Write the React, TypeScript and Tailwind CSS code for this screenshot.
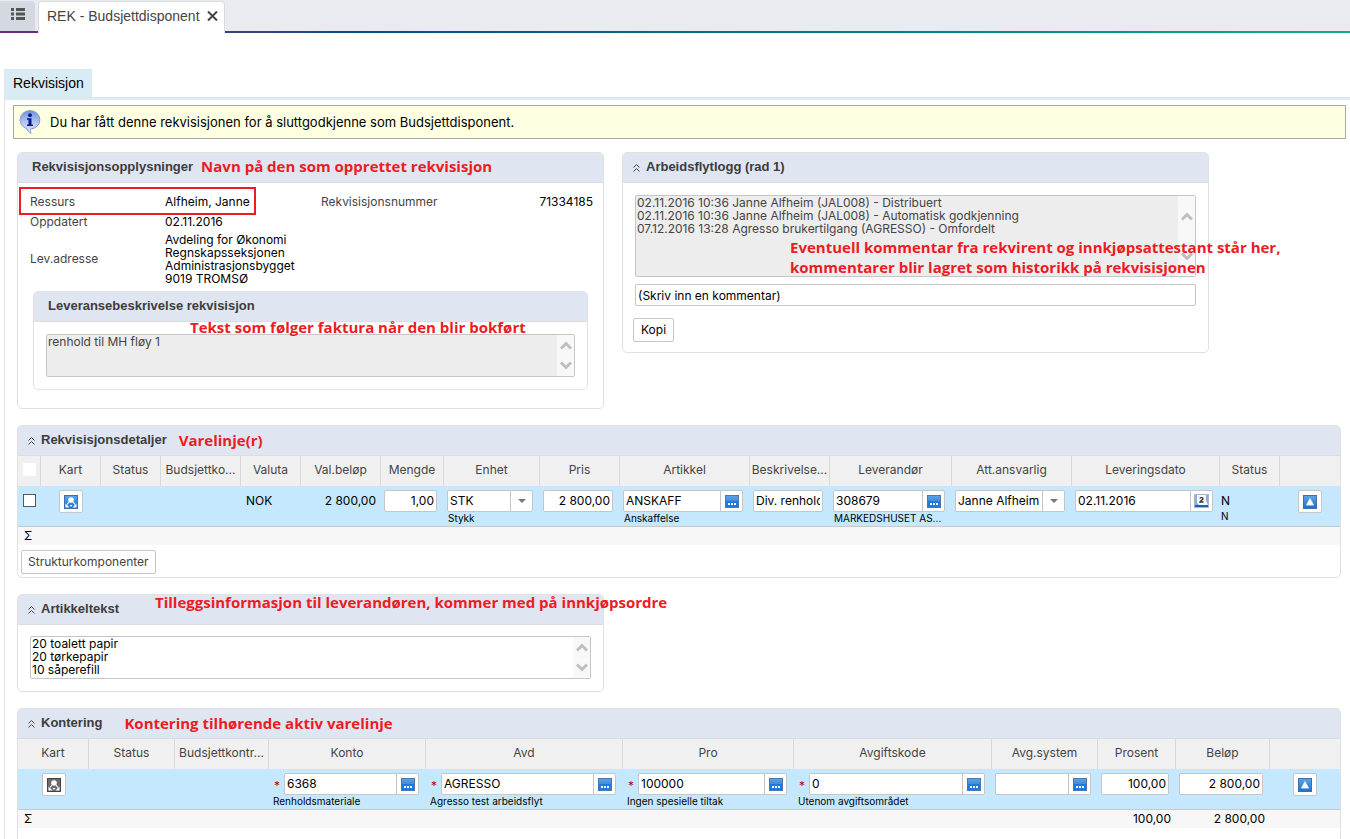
import React, { useState } from 'react';
import { clsx } from 'clsx';

/* ---------- Icons ---------- */

const ListIcon = () => (
  <svg className="h-3 w-[14px]" viewBox="0 0 14 12" fill="#555" aria-hidden="true">
    <path d="M0 0h3v3H0zM5 0h9v3H5zM0 4.5h3v3H0zM5 4.5h9v3H5zM0 9h3v3H0zM5 9h9v3H5z" />
  </svg>
);

const CloseIcon = () => (
  <svg className="h-[10px] w-[11px]" viewBox="0 0 11 10" stroke="#444" strokeWidth={2} aria-hidden="true">
    <path d="M1 .5l9 9M10 .5l-9 9" />
  </svg>
);

const InfoIcon = () => (
  <svg className="h-6 w-[22px]" viewBox="0 0 22 24" aria-hidden="true">
    <defs>
      <linearGradient id="info" x1="0" y1="0" x2="0" y2="1">
        <stop offset="0" stopColor="#6f92dd" />
        <stop offset="0.45" stopColor="#a9c0f0" />
        <stop offset="1" stopColor="#e4edfd" />
      </linearGradient>
    </defs>
    <path
      d="M11 .6a9.9 9.2 0 0 0-9.9 9.2c0 4.2 2.9 7.6 6.5 8.6.6 2.2 2.2 4 4.4 4.9-.7-1.3-.8-2.7-.5-4.3A9.9 9.2 0 0 0 20.9 9.8 9.9 9.2 0 0 0 11 .6z"
      fill="url(#info)"
      stroke="#7f97cf"
    />
    <circle cx="11" cy="5.2" r="1.9" fill="#0b1a8c" />
    <path d="M8 8.200h4.500v6.300H14V16H8v-1.500h1.500V9.700H8z" fill="#0b1a8c" />
  </svg>
);

const CollapseIcon = () => (
  <svg className="h-2 w-[7px] shrink-0" viewBox="0 0 7 8" fill="none" stroke="#444" aria-hidden="true">
    <path d="M.5 3.500l3-3 3 3M.5 7.500l3-3 3 3" />
  </svg>
);

const ScrollArrow = ({ down }: { down?: boolean }) => (
  <svg className="h-[9px] w-3" viewBox="0 0 12 9" fill="none" stroke="#bfbfbf" strokeWidth={3} aria-hidden="true">
    <path d={down ? 'M1 1.500l5 5 5-5' : 'M1 7.500l5-5 5 5'} />
  </svg>
);

const CaretIcon = () => (
  <svg className="h-1 w-2" viewBox="0 0 8 4" fill="#777" aria-hidden="true">
    <path d="M0 0h8L4 4z" />
  </svg>
);

const BlueDefs = ({ id }: { id: string }) => (
  <defs>
    <linearGradient id={id} x1="0" y1="0" x2="0" y2="1">
      <stop offset="0" stopColor="#5fa3e8" />
      <stop offset="1" stopColor="#1a70cf" />
    </linearGradient>
  </defs>
);

const LookupIcon = () => (
  <svg className="h-[13px] w-[14px]" viewBox="0 0 14 13" aria-hidden="true">
    <BlueDefs id="lookup" />
    <rect x=".5" y=".5" width="13" height="12" fill="url(#lookup)" stroke="#4a78ad" />
    <path d="M1 6h12v6H1z" fill="#1c7ae0" />
    <path d="M3 8h2v2H3zM6 8h2v2H6zM9 8h2v2H9z" fill="#fff" />
  </svg>
);

const CalendarIcon = () => (
  <svg className="h-[14px] w-[15px]" viewBox="0 0 15 14" aria-hidden="true">
    <rect x=".5" y=".5" width="14" height="13" fill="#7fb0e6" stroke="#a9b7c8" />
    <path d="M1 11h13v2H1z" fill="#1f5fae" />
    <path d="M3 1h9v6l2 4H5L3 9z" fill="#f7f7f7" />
    <path d="M6 4.500c0-1 3-1.300 3 .3C9 6 6.500 6.500 6 8h3.500" fill="none" stroke="#333" strokeWidth={1.3} />
  </svg>
);

const UpIcon = () => (
  <svg className="h-[14px] w-[14px]" viewBox="0 0 14 14" aria-hidden="true">
    <BlueDefs id="up" />
    <rect x=".5" y=".5" width="13" height="13" fill="url(#up)" stroke="#3f6fa8" />
    <path d="M7 3.500l3.500 6.500h-7z" fill="#fff" stroke="#dce9f7" strokeLinejoin="round" />
  </svg>
);

// one node on top with three arrows pointing down and out
const MapIcon = ({ gray }: { gray?: boolean }) => (
  <svg className="h-[14px] w-[14px]" viewBox="0 0 14 14" aria-hidden="true">
    <BlueDefs id="map" />
    <rect x=".5" y=".5" width="13" height="13" fill={gray ? '#6a6a6a' : 'url(#map)'} stroke={gray ? '#444' : '#3f6fa8'} />
    <circle cx="7" cy="5" r="2.800" fill="#fff" />
    <path d="M5 7L3 9.500M9 7l2 2.500" stroke="#fff" strokeWidth={1.200} />
    <path d="M1.500 8.500l4 4h-4zM12.500 8.500l-4 4h4zM7 12l-1.500-2h3z" fill="#fff" />
  </svg>
);

/* ---------- Building blocks ---------- */

const Note = ({ className, children }: { className?: string; children: React.ReactNode }) => (
  <span className={clsx("whitespace-nowrap font-['Open_Sans',sans-serif] text-[15px] font-bold text-[#ed1c24]", className)}>
    {children}
  </span>
);

interface PanelProps {
  title: string;
  collapsible?: boolean;
  note?: React.ReactNode;
  className?: string;
  children: React.ReactNode;
}

const Panel = ({ title, collapsible, note, className, children }: PanelProps) => (
  <section className={clsx('relative rounded-[5px] border border-[#e1e1e1]', className)}>
    <header
      className={clsx(
        'flex h-[30px] items-center rounded-t border-b border-[#d9dce2] bg-[#dfe5f1]',
        collapsible ? 'gap-[6px] pl-[10px]' : 'pl-[14px]'
      )}
    >
      {collapsible && (
        <button type="button" aria-label={`Skjul ${title}`}>
          <CollapseIcon />
        </button>
      )}
      <h2 className="whitespace-nowrap pb-px font-['Liberation_Sans',Arial,sans-serif] text-[13px] font-bold text-[#3c3c3c]">{title}</h2>
      {note}
    </header>
    {children}
  </section>
);

interface TextBoxProps {
  label: string;
  value: string;
  readOnly?: boolean;
  className: string;
}

const TextBox = ({ label, value, readOnly, className }: TextBoxProps) => (
  <div className={clsx('relative', className)}>
    <textarea
      aria-label={label}
      defaultValue={value}
      readOnly={readOnly}
      className={clsx(
        'block h-full w-full resize-none overflow-hidden rounded-xs border border-[#c6c6c6] pl-px pr-5 leading-[13px]',
        readOnly ? 'bg-[#ededed] text-[#444]' : 'bg-white'
      )}
    />
    <div className="absolute inset-y-px right-px flex w-[17px] flex-col items-center justify-around bg-[#f8f8f8]">
      <ScrollArrow />
      <ScrollArrow down />
    </div>
  </div>
);

const box = 'h-[22px] rounded-xs border border-[#c6c6c6] bg-white';

const iconButton = 'inline-flex h-[23px] w-6 items-center justify-center rounded-xs border border-[#c6c6c6] bg-white align-top';

interface FieldProps {
  label: string;
  value: string;
  caption?: string;
  kind?: 'lookup' | 'date' | 'select';
  right?: boolean;
  required?: boolean;
}

const Field = ({ label, value, caption, kind, right, required }: FieldProps) => (
  <div>
    <div className="flex h-[22px] items-center">
      {required && <span className="w-3 pl-[2px] pt-1 leading-[18px] text-[#c00000]">*</span>}
      <div className={clsx('flex min-w-0 flex-1', box)}>
        {kind === 'select' ? (
          <div className="relative flex-1">
            <select aria-label={label} className="block h-full w-full appearance-none pl-[2px] pr-[22px]">
              <option>{value}</option>
            </select>
            <span className="pointer-events-none absolute inset-y-0 right-0 flex w-[22px] items-center justify-center border-l border-[#c6c6c6]">
              <CaretIcon />
            </span>
          </div>
        ) : (
          <input
            aria-label={label}
            defaultValue={value}
            className={clsx('min-w-0 flex-1', right ? 'pr-[2px] text-right' : 'px-[2px]')}
          />
        )}
        {(kind === 'lookup' || kind === 'date') && (
          <button
            type="button"
            aria-label={`Velg ${label}`}
            className="flex w-[22px] shrink-0 items-center justify-center border-l border-[#c6c6c6]"
          >
            {kind === 'lookup' ? <LookupIcon /> : <CalendarIcon />}
          </button>
        )}
      </div>
    </div>
    {caption && <div className="truncate pl-px text-[10px] leading-3">{caption}</div>}
  </div>
);

interface Column {
  title: string;
  width?: string;
  cell?: React.ReactNode;
  cellClass?: string;
  sum?: string;
}

const Grid = ({ columns }: { columns: Column[] }) => (
  <table className="w-full table-fixed border-separate border-spacing-0">
    <colgroup>
      {columns.map((c, i) => (
        <col key={i} className={c.width} />
      ))}
    </colgroup>
    <thead>
      <tr className="h-[30px] bg-[#f0f0f0] text-[#444]">
        {columns.map((c, i) => (
          <th
            key={i}
            scope="col"
            className={clsx('overflow-hidden whitespace-nowrap p-0 pb-[3px] font-normal', i < columns.length - 1 && 'border-r border-[#d9d9d9]')}
          >
            {c.title || (i === 0 && <span className="ml-[5px] block h-[13px] w-[13px] bg-white" />)}
          </th>
        ))}
      </tr>
    </thead>
    <tbody>
      <tr className="h-[41px] bg-[#c5e8ff]">
        {columns.map((c, i) => (
          <td key={i} className={clsx('border-b border-[#c8c8c8] p-0 pt-1 align-top', c.cellClass)}>
            {c.cell}
          </td>
        ))}
      </tr>
    </tbody>
    <tfoot>
      <tr className="h-[18px] bg-[#f7f7f7]">
        {columns.map((c, i) => (
          <td key={i} className={clsx('p-0 leading-[18px]', i === 0 ? 'pl-[6px]' : 'pr-[5px] text-right')}>
            {c.sum}
          </td>
        ))}
      </tr>
    </tfoot>
  </table>
);

const UpButton = () => (
  <button type="button" aria-label="Flytt opp" className={iconButton}>
    <UpIcon />
  </button>
);

const MapButton = ({ gray }: { gray?: boolean }) => (
  <button type="button" aria-label="Kart" className={iconButton}>
    <MapIcon gray={gray} />
  </button>
);

/* ---------- Page ---------- */

const field = 'pl-[3px] pr-[7px]';
const plain = 'leading-[22px]';

const App: React.FC = () => {
  const [selected, setSelected] = useState(false);

  const details: Column[] = [
    {
      title: '',
      width: 'w-[23px]',
      cellClass: 'pl-[5px]',
      sum: 'Σ',
      cell: (
        <input
          type="checkbox"
          aria-label="Velg rad"
          checked={selected}
          onChange={() => setSelected(!selected)}
          className="mt-1 block h-[13px] w-[13px] appearance-none border border-[#555] bg-white checked:bg-[#1c7ae0]"
        />
      ),
    },
    { title: 'Kart', width: 'w-[60px]', cellClass: 'text-center', cell: <MapButton /> },
    { title: 'Status', width: 'w-[60px]' },
    { title: 'Budsjettko...', width: 'w-[80px]' },
    { title: 'Valuta', width: 'w-[60px]', cellClass: `pl-[5px] ${plain}`, cell: 'NOK' },
    { title: 'Val.beløp', width: 'w-[80px]', cellClass: `pr-[5px] text-right ${plain}`, cell: '2 800,00' },
    { title: 'Mengde', width: 'w-[63px]', cellClass: field, cell: <Field label="Mengde" value="1,00" right /> },
    { title: 'Enhet', width: 'w-[96px]', cellClass: field, cell: <Field label="Enhet" value="STK" kind="select" caption="Stykk" /> },
    { title: 'Pris', width: 'w-[80px]', cellClass: field, cell: <Field label="Pris" value="2 800,00" right /> },
    { title: 'Artikkel', width: 'w-[130px]', cellClass: field, cell: <Field label="Artikkel" value="ANSKAFF" kind="lookup" caption="Anskaffelse" /> },
    { title: 'Beskrivelse...', width: 'w-[80px]', cellClass: field, cell: <Field label="Beskrivelse" value="Div. renhold" /> },
    { title: 'Leverandør', width: 'w-[122px]', cellClass: field, cell: <Field label="Leverandør" value="308679" kind="lookup" caption="MARKEDSHUSET AS..." /> },
    { title: 'Att.ansvarlig', width: 'w-[120px]', cellClass: field, cell: <Field label="Att.ansvarlig" value="Janne Alfheim" kind="select" /> },
    { title: 'Leveringsdato', width: 'w-[148px]', cellClass: field, cell: <Field label="Leveringsdato" value="02.11.2016" kind="date" /> },
    {
      title: 'Status',
      width: 'w-[60px]',
      cellClass: 'pl-px',
      cell: (
        <>
          <div className="leading-[22px]">N</div>
          <div className="text-[10px] leading-[8px]">N</div>
        </>
      ),
    },
    { title: '', cellClass: 'text-center', cell: <UpButton /> },
  ];

  const posting: Column[] = [
    { title: 'Kart', width: 'w-[71px]', cellClass: 'text-center', cell: <MapButton gray />, sum: 'Σ' },
    { title: 'Status', width: 'w-[86px]' },
    { title: 'Budsjettkontr...', width: 'w-[94px]' },
    { title: 'Konto', width: 'w-[157px]', cellClass: field, cell: <Field label="Konto" value="6368" kind="lookup" caption="Renholdsmateriale" required /> },
    { title: 'Avd', width: 'w-[197px]', cellClass: field, cell: <Field label="Avd" value="AGRESSO" kind="lookup" caption="Agresso test arbeidsflyt" required /> },
    { title: 'Pro', width: 'w-[171px]', cellClass: field, cell: <Field label="Pro" value="100000" kind="lookup" caption="Ingen spesielle tiltak" required /> },
    { title: 'Avgiftskode', width: 'w-[198px]', cellClass: field, cell: <Field label="Avgiftskode" value="0" kind="lookup" caption="Utenom avgiftsområdet" required /> },
    { title: 'Avg.system', width: 'w-[106px]', cellClass: field, cell: <Field label="Avg.system" value="" kind="lookup" /> },
    { title: 'Prosent', width: 'w-[78px]', cellClass: field, cell: <Field label="Prosent" value="100,00" right />, sum: '100,00' },
    { title: 'Beløp', width: 'w-[94px]', cellClass: field, cell: <Field label="Beløp" value="2 800,00" right />, sum: '2 800,00' },
    { title: '', cellClass: 'text-center', cell: <UpButton /> },
  ];

  return (
    <div className="flex min-h-screen flex-col bg-white font-[Inter,sans-serif] text-[12px] leading-5 text-black">
      {/* Window tabs */}
      <nav className="relative flex h-[33px] gap-[3px] bg-[#eaebf0] pt-px">
        <div className="absolute inset-x-0 bottom-0 h-[2px] bg-linear-to-r from-[#6b2a7c] via-[#0a4a80] via-25% to-[#12ab8c]" />
        <button type="button" aria-label="Meny" className="flex h-[30px] w-[35px] items-center justify-center rounded-tr bg-[#d4d8e1] pb-1">
          <ListIcon />
        </button>
        <div className="relative flex items-center gap-[7px] rounded-t border border-b-0 border-[#d8dae2] bg-white pb-1 pl-2 pr-[6px]">
          <a href="#rek" className="font-['Liberation_Sans',Arial,sans-serif] text-[14px] text-[#444]">
            REK - Budsjettdisponent
          </a>
          <button type="button" aria-label="Lukk">
            <CloseIcon />
          </button>
        </div>
      </nav>

      <main className="ml-1 mt-9 flex flex-1 flex-col">
        <div className="flex">
          <a
            href="#rekvisisjon"
            className="flex h-7 items-center border-l border-t border-[#dfe6ea] bg-[#d9ecf5] px-2 pb-[2px] font-['Liberation_Sans',Arial,sans-serif] text-[14px]"
          >
            Rekvisisjon
          </a>
        </div>
        <div className="h-[3px] border-t border-[#dfe3e6] bg-[#d9ecf5]" />

        <div className="flex flex-1 flex-col border-l border-[#e3e3e3] pt-[5px]">
          <div className="ml-2 mr-1 flex h-[34px] items-center gap-[9px] border border-[#aaa9a0] bg-[#ffffe1] pl-[5px] text-[13px]">
            <InfoIcon />
            Du har fått denne rekvisisjonen for å sluttgodkjenne som Budsjettdisponent.
          </div>

          <div className="ml-3 mr-[9px] mt-[13px] flex flex-1 flex-col gap-4">
            <div className="flex items-start gap-[18px]">
              <Panel
                title="Rekvisisjonsopplysninger"
                className="max-w-[587px] flex-1 pb-[18px]"
                note={<Note className="ml-2 pb-1">Navn på den som opprettet rekvisisjon</Note>}
              >
                <div className="absolute left-px top-[34px] h-7 w-[237px] border-2 border-[#ed1c24]" />
                <dl className="mx-[10px] mb-[6px] mt-[9px] grid grid-cols-[135px_156px_auto_1fr] items-center pl-[2px] text-black">
                  <dt className="text-[#444]">Ressurs</dt>
                  <dd>Alfheim, Janne</dd>
                  <dt className="text-[#444]">Rekvisisjonsnummer</dt>
                  <dd className="text-right">71334185</dd>
                  <dt className="text-[#444]">Oppdatert</dt>
                  <dd className="col-span-3">02.11.2016</dd>
                  <dt className="text-[#444]">Lev.adresse</dt>
                  <dd className="col-span-3 mt-px leading-[13px]">
                    Avdeling for Økonomi
                    <br />
                    Regnskapsseksjonen
                    <br />
                    Administrasjonsbygget
                    <br />
                    9019 TROMSØ
                  </dd>
                </dl>
                <Panel title="Leveransebeskrivelse rekvisisjon" className="mx-[15px]">
                  <TextBox label="Leveransebeskrivelse" value="renhold til MH fløy 1" readOnly className="m-3 h-[43px]" />
                  <Note className="absolute left-[156px] top-[25px]">Tekst som følger faktura når den blir bokført</Note>
                </Panel>
              </Panel>

              <Panel title="Arbeidsflytlogg (rad 1)" collapsible className="max-w-[587px] flex-1 pb-[10px]">
                <div className="px-3 pt-3">
                  <TextBox
                    label="Arbeidsflytlogg"
                    value={
                      '02.11.2016 10:36 Janne Alfheim (JAL008) - Distribuert\n02.11.2016 10:36 Janne Alfheim (JAL008) - Automatisk godkjenning\n07.12.2016 13:28 Agresso brukertilgang (AGRESSO) - Omfordelt'
                    }
                    readOnly
                    className="h-[82px]"
                  />
                  <input
                    aria-label="Kommentar"
                    defaultValue="(Skriv inn en kommentar)"
                    className={clsx('mt-[7px] block w-full px-[2px]', box)}
                  />
                  <button type="button" className="-ml-0.5 mt-3 block h-6 rounded-xs border border-[#c6c6c6] bg-white px-[7px]">
                    Kopi
                  </button>
                </div>
                <Note className="absolute left-[167px] top-[84px] leading-5">
                  Eventuell kommentar fra rekvirent og innkjøpsattestant står her,
                  <br />
                  kommentarer blir lagret som historikk på rekvisisjonen
                </Note>
              </Panel>
            </div>

            <Panel title="Rekvisisjonsdetaljer" collapsible note={<Note className="ml-[6px] pb-[2px]">Varelinje(r)</Note>}>
              <Grid columns={details} />
              <button type="button" className="mx-[3px] mb-[3px] mt-[5px] block h-6 rounded-xs border border-[#c6c6c6] bg-white px-[6px] text-[#444]">
                Strukturkomponenter
              </button>
            </Panel>

            <Panel title="Artikkeltekst" collapsible className="w-full max-w-[587px]">
              <TextBox label="Artikkeltekst" value={'20 toalett papir\n20 tørkepapir\n10 såperefill'} className="m-3 mt-[11px] h-[43px]" />
              <Note className="absolute left-[137px] top-[-3px]">Tilleggsinformasjon til leverandøren, kommer med på innkjøpsordre</Note>
            </Panel>

            <Panel
              title="Kontering"
              collapsible
              className="flex-1 rounded-b-none border-b-0"
              note={<Note className="ml-4 pb-[2px]">Kontering tilhørende aktiv varelinje</Note>}
            >
              <Grid columns={posting} />
            </Panel>
          </div>
        </div>
      </main>
    </div>
  );
};

export default App;
